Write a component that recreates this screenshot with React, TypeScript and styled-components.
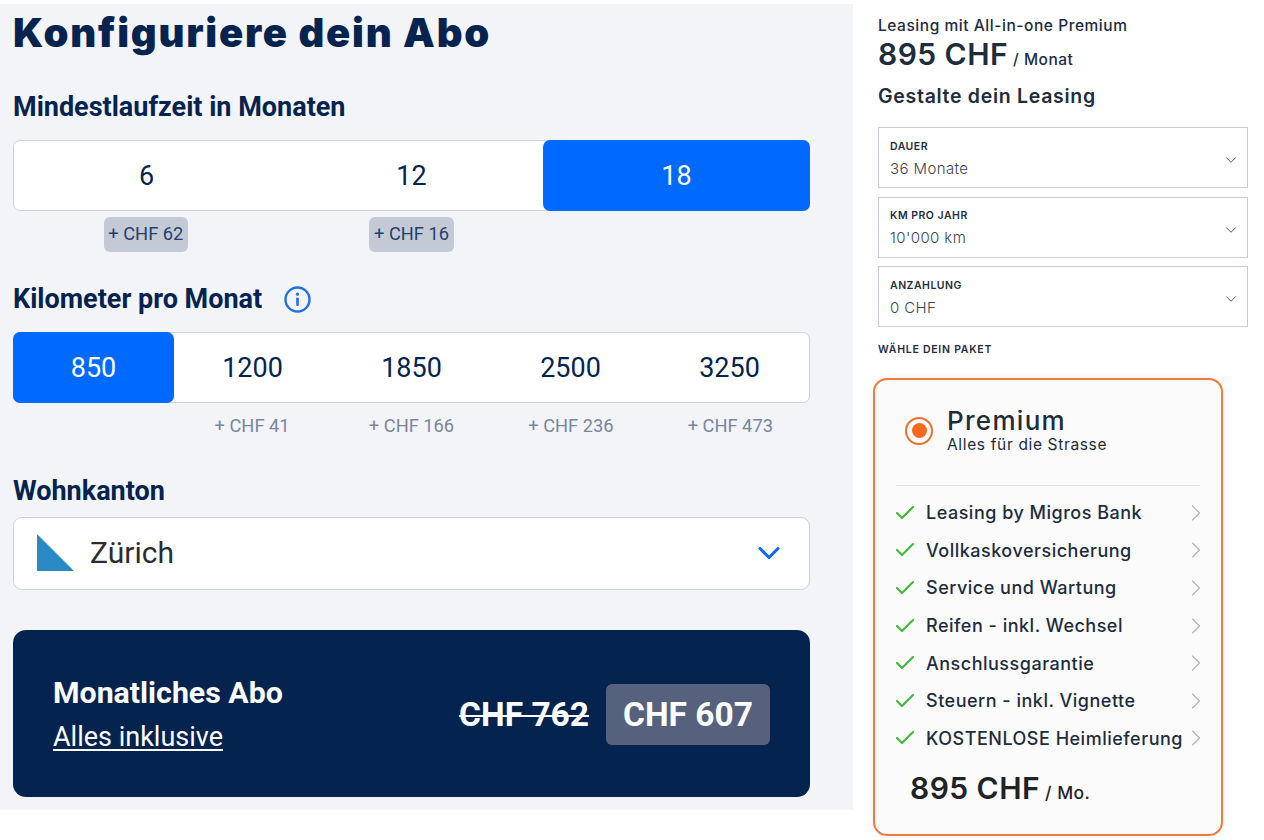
import React from "react";
import styled, { createGlobalStyle } from "styled-components";
import { ChevronDown, ChevronRight, Check } from "lucide-react";

const Global = createGlobalStyle`
  html, body { margin: 0; padding: 0; background: #fff; }
  * { box-sizing: border-box; }
  body { font-family: Roboto, "Liberation Sans", sans-serif; }
`;

const Page = styled.div`
  display: flex;
  width: 1264px;
  height: 840px;
  overflow: hidden;
`;

const Left = styled.section`
  flex: none;
  width: 853px;
  height: 806px;
  margin-top: 4px;
  padding: 0 43px 0 13px;
  background: #f2f4f8;
  color: #04234f;
`;

const Title = styled.h1`
  margin: 0;
  height: 59px;
  font-family: Inter, sans-serif;
  font-weight: 900;
  font-size: 40px;
  line-height: 58px;
  letter-spacing: 1.75px;
  color: #04234f;
  white-space: nowrap;
`;

const Heading = styled.h2`
  display: flex;
  align-items: center;
  gap: 22px;
  margin: 0;
  height: 30px;
  font-size: 27px;
  line-height: 30px;
  font-weight: 700;
  color: #04234f;
`;

const TermHeading = styled(Heading)`
  margin-top: 29px;
`;

const KmHeading = styled(Heading)`
  margin-top: 32px;
`;

const CantonHeading = styled(Heading)`
  margin-top: 32px;
`;

const Segment = styled.div<{ $n: number }>`
  display: grid;
  grid-template-columns: repeat(${(p) => p.$n}, 1fr);
  height: 71px;
  margin-top: 18px;
  background: #fff;
  border: 1px solid #cfd4dc;
  border-radius: 7px;
`;

const SegItem = styled.div<{ $active?: boolean }>`
  display: flex;
  align-items: center;
  justify-content: center;
  margin: -1px;
  font-size: 27px;
  font-weight: 400;
  border-radius: 7px;
  color: ${(p) => (p.$active ? "#fff" : "#04234f")};
  background: ${(p) => (p.$active ? "#0069ff" : "transparent")};
`;

const Hints = styled.div<{ $n: number }>`
  display: grid;
  grid-template-columns: repeat(${(p) => p.$n}, 1fr);
  justify-items: center;
  align-items: center;
  height: 35px;
  margin-top: 6px;
`;

const Chip = styled.span`
  display: inline-flex;
  align-items: center;
  height: 35px;
  padding: 0 4.5px 2px;
  background: #c4cad5;
  border-radius: 6px;
  font-size: 18.3px;
  color: #24406a;
`;

const Hint = styled.span`
  padding-bottom: 2px;
  font-size: 18.3px;
  color: #7a8699;
`;

const CantonSelect = styled.div`
  display: flex;
  align-items: center;
  height: 73px;
  margin-top: 11px;
  padding: 0 22px 2px 23px;
  background: #fff;
  border: 1px solid #cfd4dc;
  border-radius: 9px;
`;

const CantonName = styled.span`
  flex: 1;
  margin-left: 15px;
  font-size: 30px;
  color: #2a2c30;
`;

const Flag = styled.svg`
  width: 38px;
  height: 39px;
  display: block;
`;

const PriceCard = styled.div`
  display: flex;
  align-items: center;
  justify-content: space-between;
  height: 167px;
  margin-top: 40px;
  padding: 0 40px 0 40px;
  background: #04234f;
  border-radius: 13px;
  color: #fff;
`;

const PriceText = styled.div`
  padding-top: 2px;
`;

const PriceLabel = styled.div`
  font-size: 30.3px;
  font-weight: 700;
  line-height: 34px;
`;

const PriceLink = styled.a`
  display: block;
  margin-top: 11px;
  font-size: 27px;
  line-height: 32px;
  text-decoration: underline;
  text-decoration-thickness: 2px;
  text-underline-offset: 3px;
  color: #fff;
`;

const PriceRow = styled.div`
  display: flex;
  align-items: center;
  gap: 17px;
  padding-top: 2px;
`;

const OldPrice = styled.span`
  font-size: 33.5px;
  font-weight: 700;
  text-decoration: line-through;
  text-decoration-thickness: 2px;
`;

const NewPrice = styled.span`
  display: flex;
  align-items: center;
  height: 61px;
  padding: 0 17px;
  background: #56627d;
  border-radius: 6px;
  font-size: 33.5px;
  font-weight: 700;
`;

const Right = styled.section`
  flex: none;
  width: 386px;
  margin-left: 25px;
  padding-top: 16px;
  font-family: Inter, sans-serif;
  color: #1e2c3c;
`;

const Lease = styled.div`
  font-size: 15.5px;
  font-weight: 500;
  line-height: 19px;
  letter-spacing: 0.55px;
`;

const BigPrice = styled.div`
  display: flex;
  align-items: baseline;
  gap: 5px;
  height: 39px;
  font-size: 30px;
  line-height: 39px;
  font-weight: 600;
  letter-spacing: 0.45px;
`;

const Per = styled.span`
  font-size: 15.5px;
  font-weight: 500;
  letter-spacing: 0.5px;
`;

const Shape = styled.div`
  margin-top: 11px;
  font-size: 19.5px;
  line-height: 23px;
  font-weight: 600;
  letter-spacing: 0.7px;
`;

const SelectList = styled.div`
  display: flex;
  flex-direction: column;
  gap: 8.5px;
  width: 370px;
  margin-top: 19px;
`;

const SelectBox = styled.div`
  display: flex;
  align-items: center;
  justify-content: space-between;
  height: 61px;
  padding: 3px 7px 0 11px;
  background: #fff;
  border: 1px solid #c8cdd3;
`;

const SelectLabel = styled.div`
  font-size: 10.5px;
  line-height: 14px;
  font-weight: 600;
  letter-spacing: 0.5px;
  text-transform: uppercase;
`;

const SelectValue = styled.div`
  margin-top: 5px;
  font-size: 15px;
  line-height: 20px;
  font-weight: 300;
  color: #3d4550;
  letter-spacing: 0.4px;
`;

const SelectArrow = styled(ChevronDown)`
  margin-top: 2px;
  color: #4d5560;
`;

const PackLabel = styled.div`
  margin-top: 16px;
  font-size: 10.5px;
  line-height: 14px;
  font-weight: 600;
  letter-spacing: 0.75px;
`;

const Card = styled.div`
  width: 350px;
  height: 458px;
  margin: 21px 0 0 -5px;
  padding: 24px 21px 0 22px;
  background: #fbfbfc;
  border: 2px solid #ef7a3c;
  border-radius: 14px;
  box-shadow: 0 0 9px rgba(0, 0, 0, 0.07);
`;

const CardHead = styled.div`
  display: flex;
  align-items: center;
  gap: 14px;
  height: 53px;
  padding-left: 8px;
`;

const Radio = styled.span`
  display: flex;
  align-items: center;
  justify-content: center;
  width: 28px;
  height: 28px;
  border: 2.5px solid #f26f2c;
  border-radius: 50%;
  &::after {
    content: "";
    width: 15px;
    height: 15px;
    background: #f8681e;
    border-radius: 50%;
  }
`;

const Plan = styled.div`
  font-size: 26px;
  line-height: 28px;
  font-weight: 500;
  letter-spacing: 1.3px;
`;

const PlanSub = styled.div`
  font-size: 15.5px;
  line-height: 19px;
  letter-spacing: 0.65px;
`;

const Divider = styled.div`
  height: 1px;
  margin: 28px 0 0 -1px;
  background: #e3e4e6;
`;

const Features = styled.ul`
  display: flex;
  flex-direction: column;
  margin: 8px 0 0;
  padding: 0;
  list-style: none;
`;

const Feature = styled.li`
  display: flex;
  align-items: center;
  height: 37.6px;
  font-size: 18px;
  font-weight: 500;
  letter-spacing: 0.5px;
  white-space: nowrap;
`;

const FeatureText = styled.span`
  flex: 1;
  min-width: 0;
  margin-left: 9px;
`;

const CheckIcon = styled(Check)`
  flex: none;
  margin-left: -4px;
  color: #45b83f;
`;

const ArrowIcon = styled(ChevronRight)`
  flex: none;
  margin-right: -10px;
  color: #b0b3b8;
`;

const CardPrice = styled.div`
  display: flex;
  align-items: baseline;
  gap: 5px;
  margin-top: 12px;
  padding-left: 13px;
  font-size: 30px;
  line-height: 38px;
  font-weight: 600;
  letter-spacing: 0.45px;
  color: #1f2226;
`;

const CardPer = styled.span`
  font-size: 17.5px;
  font-weight: 500;
`;

const features = [
  "Leasing by Migros Bank",
  "Vollkaskoversicherung",
  "Service und Wartung",
  "Reifen - inkl. Wechsel",
  "Anschlussgarantie",
  "Steuern - inkl. Vignette",
  "KOSTENLOSE Heimlieferung",
];

const selects = [
  ["Dauer", "36 Monate"],
  ["KM pro Jahr", "10'000 km"],
  ["Anzahlung", "0 CHF"],
];

export default function App() {
  return (
    <Page>
      <Global />
      <Left>
        <Title>Konfiguriere dein Abo</Title>
        <TermHeading>Mindestlaufzeit in Monaten</TermHeading>
        <Segment $n={3}>
          <SegItem>6</SegItem>
          <SegItem>12</SegItem>
          <SegItem $active>18</SegItem>
        </Segment>
        <Hints $n={3}>
          <Chip>+ CHF 62</Chip>
          <Chip>+ CHF 16</Chip>
        </Hints>
        <KmHeading>
          Kilometer pro Monat
          <svg width="27" height="27" viewBox="0 0 27 27" fill="none">
            <circle cx="13.5" cy="13.5" r="12" stroke="#1f6fe8" strokeWidth="2.4" />
            <circle cx="13.5" cy="8.2" r="1.6" fill="#1f6fe8" />
            <rect x="12.2" y="11.4" width="2.6" height="8.6" rx="1.2" fill="#1f6fe8" />
          </svg>
        </KmHeading>
        <Segment $n={5}>
          <SegItem $active>850</SegItem>
          <SegItem>1200</SegItem>
          <SegItem>1850</SegItem>
          <SegItem>2500</SegItem>
          <SegItem>3250</SegItem>
        </Segment>
        <Hints $n={5}>
          <span />
          <Hint>+ CHF 41</Hint>
          <Hint>+ CHF 166</Hint>
          <Hint>+ CHF 236</Hint>
          <Hint>+ CHF 473</Hint>
        </Hints>
        <CantonHeading>Wohnkanton</CantonHeading>
        <CantonSelect>
          <Flag viewBox="0 0 38 39">
            <rect width="38" height="39" fill="#fff" />
            <path d="M0 1 L37 38 L0 38 Z" fill="#2a8ac6" />
          </Flag>
          <CantonName>Zürich</CantonName>
          <ChevronDown size={36} color="#0f6cf0" strokeWidth={2.1} />
        </CantonSelect>
        <PriceCard>
          <PriceText>
            <PriceLabel>Monatliches Abo</PriceLabel>
            <PriceLink>Alles inklusive</PriceLink>
          </PriceText>
          <PriceRow>
            <OldPrice>CHF 762</OldPrice>
            <NewPrice>CHF 607</NewPrice>
          </PriceRow>
        </PriceCard>
      </Left>
      <Right>
        <Lease>Leasing mit All-in-one Premium</Lease>
        <BigPrice>
          895 CHF <Per>/ Monat</Per>
        </BigPrice>
        <Shape>Gestalte dein Leasing</Shape>
        <SelectList>
          {selects.map(([l, v]) => (
            <SelectBox key={l}>
              <div>
                <SelectLabel>{l}</SelectLabel>
                <SelectValue>{v}</SelectValue>
              </div>
              <SelectArrow size={18} strokeWidth={1.3} />
            </SelectBox>
          ))}
        </SelectList>
        <PackLabel>WÄHLE DEIN PAKET</PackLabel>
        <Card>
          <CardHead>
            <Radio />
            <div>
              <Plan>Premium</Plan>
              <PlanSub>Alles für die Strasse</PlanSub>
            </div>
          </CardHead>
          <Divider />
          <Features>
            {features.map((f) => (
              <Feature key={f}>
                <CheckIcon size={24} strokeWidth={2.2} />
                <FeatureText>{f}</FeatureText>
                <ArrowIcon size={28} strokeWidth={1} />
              </Feature>
            ))}
          </Features>
          <CardPrice>
            895 CHF <CardPer>/ Mo.</CardPer>
          </CardPrice>
        </Card>
      </Right>
    </Page>
  );
}
